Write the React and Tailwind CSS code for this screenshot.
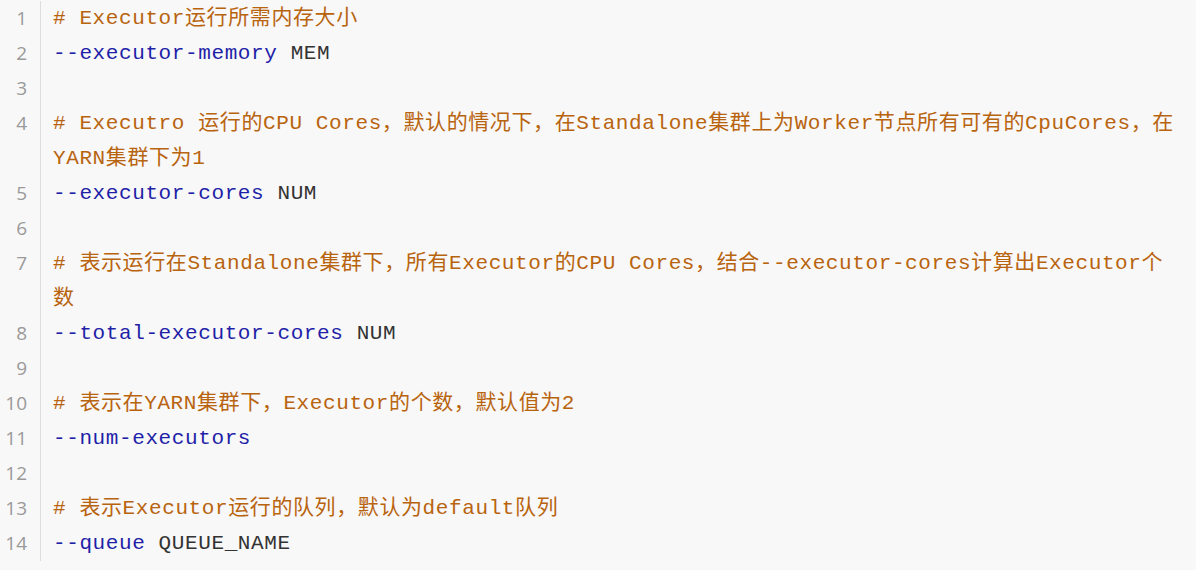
import React from 'react';

const lines = [
  { n: 1, parts: [{ t: 'c', s: '# Executor运行所需内存大小' }] },
  { n: 2, parts: [{ t: 'f', s: '--executor-memory' }, { t: 'v', s: ' MEM' }] },
  { n: 3, parts: [] },
  {
    n: 4,
    parts: [{ t: 'c', s: '# Executro 运行的CPU Cores，默认的情况下，在Standalone集群上为Worker节点所有可有的CpuCores，在' }],
    wrap: [{ t: 'c', s: 'YARN集群下为1' }],
  },
  { n: 5, parts: [{ t: 'f', s: '--executor-cores' }, { t: 'v', s: ' NUM' }] },
  { n: 6, parts: [] },
  {
    n: 7,
    parts: [{ t: 'c', s: '# 表示运行在Standalone集群下，所有Executor的CPU Cores，结合--executor-cores计算出Executor个' }],
    wrap: [{ t: 'c', s: '数' }],
  },
  { n: 8, parts: [{ t: 'f', s: '--total-executor-cores' }, { t: 'v', s: ' NUM' }] },
  { n: 9, parts: [] },
  { n: 10, parts: [{ t: 'c', s: '# 表示在YARN集群下，Executor的个数，默认值为2' }] },
  { n: 11, parts: [{ t: 'f', s: '--num-executors' }] },
  { n: 12, parts: [] },
  { n: 13, parts: [{ t: 'c', s: '# 表示Executor运行的队列，默认为default队列' }] },
  { n: 14, parts: [{ t: 'f', s: '--queue' }, { t: 'v', s: ' QUEUE_NAME' }] },
];

const colorOf = {
  c: 'text-[#b8640f]',
  f: 'text-[#1f1fa8]',
  v: 'text-[#333333]',
};

function Segs({ parts }) {
  return parts.map((p, i) => (
    <span key={i} className={colorOf[p.t]}>{p.s}</span>
  ));
}

export default function App() {
  return (
    <div className="w-[1196px] h-[570px] bg-[#f8f8f8] pt-px">
      {lines.map(line => (
        <div key={line.n} className="flex">
          <div className="w-[41px] shrink-0 border-r border-[#dddddd] pr-[13px] text-right text-[19px] leading-[35px] text-[#9a9a9a] font-['Open_Sans',sans-serif]">
            {line.n}
          </div>
          <div className="pl-[12px] font-['Liberation_Mono','Noto_Sans_CJK_SC',monospace] text-[21px] tracking-[0.6px] leading-[35px] whitespace-pre">
            <div className="h-[35px]"><Segs parts={line.parts} /></div>
            {line.wrap && <div className="h-[35px]"><Segs parts={line.wrap} /></div>}
          </div>
        </div>
      ))}
    </div>
  );
}
